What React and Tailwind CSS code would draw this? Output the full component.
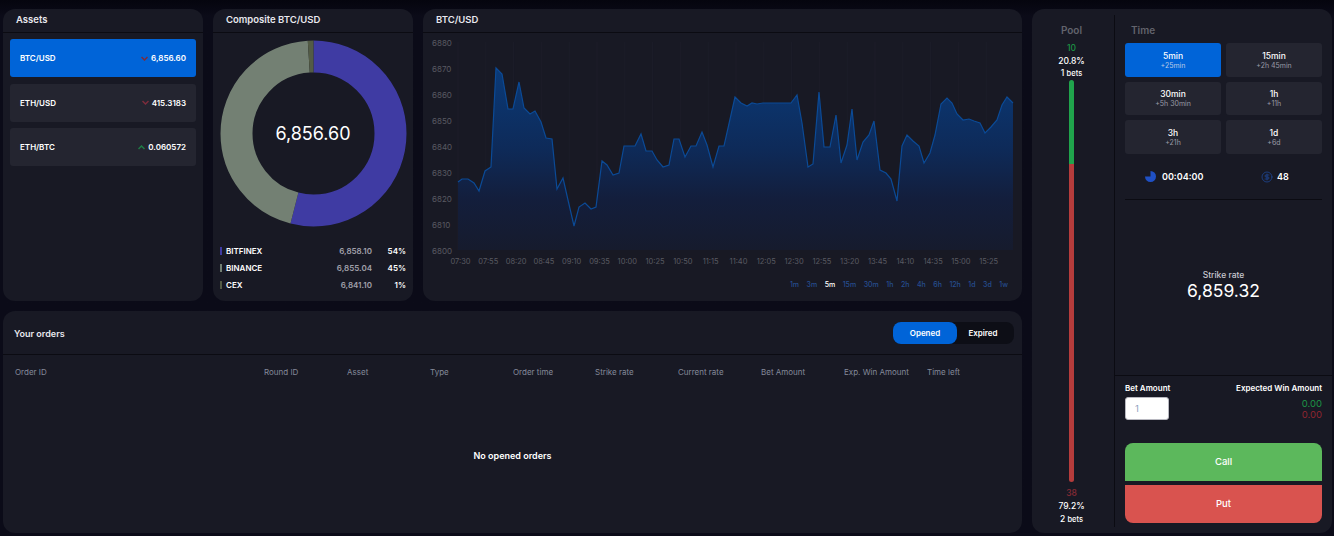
import { CircleDollarSign } from 'lucide-react'

const assets = [
  { name: 'BTC/USD', value: '6,856.60', up: false, active: true },
  { name: 'ETH/USD', value: '415.3183', up: false },
  { name: 'ETH/BTC', value: '0.060572', up: true },
]

const sources = [
  { name: 'BITFINEX', value: '6,858.10', pct: '54%', bar: 'bg-[#3f3ba3]' },
  { name: 'BINANCE', value: '6,855.04', pct: '45%', bar: 'bg-[#738073]' },
  { name: 'CEX', value: '6,841.10', pct: '1%', bar: 'bg-[#535b45]' },
]

const prices = [6880, 6870, 6860, 6850, 6840, 6830, 6820, 6810, 6800]
const times = ['07:30', '07:55', '08:20', '08:45', '09:10', '09:35', '10:00', '10:25', '10:50', '11:15', '11:40', '12:05', '12:30', '12:55', '13:20', '13:45', '14:10', '14:35', '15:00', '15:25']
const frames = ['1m', '3m', '5m', '15m', '30m', '1h', '2h', '4h', '6h', '12h', '1d', '3d', '1w']

const points = '458,182 462,179 468,179 474,183 479,191 485,171 491,167 496,68 502,74 508,109 513,109 519,82 524,108 530,114 535,111 541,122 546,138 552,139 557,189 563,178 568,200 574,226 579,207 585,203 591,209 596,207 602,161 607,165 613,175 619,173 624,146 635,146 641,134 646,151 652,151 657,160 663,167 669,165 674,139 679,139 685,157 691,146 696,146 702,132 707,145 713,167 719,146 724,146 735,97 741,103 747,106 752,103 757,104 763,103 791,103 797,95 802,123 808,167 813,164 819,92 824,147 830,147 836,115 841,163 847,145 852,109 857,160 863,142 869,135 874,121 880,170 886,173 891,179 897,201 902,146 907,135 913,141 919,146 924,163 930,153 935,135 941,104 947,98 952,103 957,114 963,120 969,119 974,121 980,123 985,133 991,127 997,120 1002,105 1007,97 1013,103'

const columns = [
  { label: 'Order ID', w: 'w-[249px]' },
  { label: 'Round ID', w: 'w-[83px]' },
  { label: 'Asset', w: 'w-[83px]' },
  { label: 'Type', w: 'w-[83px]' },
  { label: 'Order time', w: 'w-[82px]' },
  { label: 'Strike rate', w: 'w-[83px]' },
  { label: 'Current rate', w: 'w-[83px]' },
  { label: 'Bet Amount', w: 'w-[83px]' },
  { label: 'Exp. Win Amount', w: 'w-[83px]' },
  { label: 'Time left', w: 'w-[80px]' },
]

const rounds = [
  { time: '5min', left: '+25min', active: true },
  { time: '15min', left: '+2h 45min' },
  { time: '30min', left: '+5h 30min' },
  { time: '1h', left: '+11h' },
  { time: '3h', left: '+21h' },
  { time: '1d', left: '+6d' },
]

const Chevron = ({ up }) => (
  <svg width="7" height="5" viewBox="0 0 7 5" fill="none" className={up ? 'text-[#1f7a45]' : 'text-[#7c2c3c]'}>
    <path d={up ? 'M0.5 4 L3.5 1 L6.5 4' : 'M0.5 1 L3.5 4 L6.5 1'} stroke="currentColor" strokeWidth="1.5" />
  </svg>
)

const PanelTitle = ({ children, className }) => (
  <div className={`flex h-[24px] shrink-0 items-center border-b border-[#0b0b12] pb-[1px] text-[9.5px] font-semibold text-[#e8e8ee] ${className}`}>
    {children}
  </div>
)

const Assets = () => (
  <div className="flex w-[200px] flex-col rounded-xl bg-[#181924]">
    <PanelTitle className="pl-[13px]">Assets</PanelTitle>
    <div className="flex flex-col gap-[6.5px] px-[7px] pt-[6px]">
      {assets.map((a) => (
        <div key={a.name} className={`flex h-[38px] items-center rounded-[3px] px-[10px] text-[8px] font-semibold text-white ${a.active ? 'bg-[#0064d8]' : 'bg-[#242530]'}`}>
          <span>{a.name}</span>
          <span className="ml-auto mr-[3px]"><Chevron up={a.up} /></span>
          <span>{a.value}</span>
        </div>
      ))}
    </div>
  </div>
)

const Composite = () => (
  <div className="flex w-[200px] flex-col rounded-xl bg-[#181924]">
    <PanelTitle className="pl-[13px]">Composite BTC/USD</PanelTitle>
    <div className="relative mx-auto mt-[7px] h-[187px] w-[187px]">
      <svg width="187" height="187" viewBox="0 0 187 187" className="-rotate-90">
        <circle cx="93.5" cy="93.5" r="77" fill="none" stroke="#3f3ba3" strokeWidth="32" pathLength="100" strokeDasharray="54 46" />
        <circle cx="93.5" cy="93.5" r="77" fill="none" stroke="#738073" strokeWidth="32" pathLength="100" strokeDasharray="45 55" strokeDashoffset="-54" />
        <circle cx="93.5" cy="93.5" r="77" fill="none" stroke="#535b45" strokeWidth="32" pathLength="100" strokeDasharray="1 99" strokeDashoffset="-99" />
      </svg>
      <div className="absolute inset-0 flex items-center justify-center text-[18px] text-white">6,856.60</div>
    </div>
    <div className="mt-[18px] flex flex-col gap-[5px] px-[7px]">
      {sources.map((s) => (
        <div key={s.name} className="flex h-[12px] items-center text-[8px] font-semibold text-white">
          <span className={`mr-[4px] h-[8px] w-[2px] ${s.bar}`} />
          <span>{s.name}</span>
          <span className="ml-auto text-[#a0a0aa]">{s.value}</span>
          <span className="w-[34px] text-right">{s.pct}</span>
        </div>
      ))}
    </div>
  </div>
)

const PriceChart = () => (
  <div className="flex flex-1 flex-col rounded-xl bg-[#181924]">
    <PanelTitle className="pl-[13px]">BTC/USD</PanelTitle>
    <svg width="599" height="238" viewBox="423 33 599 238" className="block">
      <defs>
        <linearGradient id="priceFill" x1="0" y1="0" x2="0" y2="1">
          <stop offset="0" stopColor="#0a3a78" />
          <stop offset="0.45" stopColor="#0e2a58" />
          <stop offset="0.72" stopColor="#131e3c" />
          <stop offset="1" stopColor="#161b2d" />
        </linearGradient>
      </defs>
      {times.map((t, i) => (
        <line key={t} x1={458 + i * 27.8} x2={458 + i * 27.8} y1="42" y2="250" stroke="#1c1d29" strokeWidth="1" />
      ))}
      <polygon points={`458,250 ${points} 1013,250`} fill="url(#priceFill)" />
      <polyline points={points} fill="none" stroke="#0b4a96" strokeWidth="1.2" />
      {prices.map((p, i) => (
        <text key={p} x="432" y={46 + i * 26} fontSize="8" fill="#585962">{p}</text>
      ))}
      {times.map((t, i) => (
        <text key={t} x={460.5 + i * 27.8} y="264" fontSize="7.5" textAnchor="middle" fill="#585962">{t}</text>
      ))}
    </svg>
    <div className="flex justify-end gap-[7.5px] pr-[14px] pt-[9px] text-[7px] font-medium text-[#264d8f]">
      {frames.map((f) => (
        <span key={f} className={f === '5m' ? 'text-white' : ''}>{f}</span>
      ))}
    </div>
  </div>
)

const Orders = () => (
  <div className="mt-[10px] flex h-[222px] flex-col rounded-xl bg-[#181924]">
    <div className="flex h-[44px] shrink-0 items-center border-b border-[#0b0b12] pl-[11px] pr-[8px]">
      <span className="pt-[2px] text-[9px] font-semibold text-[#e8e8ee]">Your orders</span>
      <div className="ml-auto flex h-[22px] w-[121px] rounded-lg bg-[#0d0e16] text-[8px] font-semibold text-white">
        <span className="flex w-[64px] items-center justify-center rounded-lg bg-[#0064d8]">Opened</span>
        <span className="flex flex-1 items-center justify-center pr-[5px]">Expired</span>
      </div>
    </div>
    <div className="flex pl-[12px] pt-[11px] text-[8px] text-[#84899a]">
      {columns.map((c) => (
        <span key={c.label} className={`${c.w} shrink-0 whitespace-nowrap`}>{c.label}</span>
      ))}
    </div>
    <div className="flex flex-1 items-center justify-center pt-[1px] text-[9px] font-semibold text-white">No opened orders</div>
  </div>
)

const Pool = () => (
  <div className="flex w-[83px] shrink-0 flex-col items-center border-r border-[#0b0b12] pr-[3px] text-[8.5px] font-medium text-white">
    <div className="flex h-[23px] items-end text-[10px] font-semibold text-[#62636c]">Pool</div>
    <div className="mt-[4px] text-[#1c9445]">10</div>
    <div>20.8%</div>
    <div className="leading-[11px]">1 <span className="text-[7.5px]">bets</span></div>
    <div className="mt-[1.5px] flex h-[402px] w-[5px] flex-col overflow-hidden rounded-full">
      <div className="h-[84px] bg-[#20a44c]" />
      <div className="flex-1 bg-[#b53c3c]" />
    </div>
    <div className="mt-[5px] text-[#8a2b35]">38</div>
    <div>79.2%</div>
    <div className="leading-[12px]">2 <span className="text-[7.5px]">bets</span></div>
  </div>
)

const BetPanel = () => (
  <div className="flex flex-1 flex-col">
    <div className="flex h-[28px] shrink-0 items-end pb-[5px] pl-[16px] text-[10px] font-semibold text-[#62636c]">Time</div>
    <div className="grid grid-cols-2 gap-[5px] px-[10px]">
      {rounds.map((r) => (
        <div key={r.time} className={`flex h-[33.6px] flex-col items-center justify-center rounded-[3px] pt-[1px] ${r.active ? 'bg-[#0064d8]' : 'bg-[#242530]'}`}>
          <span className="text-[8.5px] font-medium leading-[10px] text-white">{r.time}</span>
          <span className={`text-[7px] leading-[9px] ${r.active ? 'text-[#b9c9e6]' : 'text-[#9a9ba6]'}`}>{r.left}</span>
        </div>
      ))}
    </div>
    <div className="mx-[10px] flex h-[46px] shrink-0 items-center border-b border-[#0b0b12] pt-[1px] text-[9px] font-semibold text-white">
      <div className="flex w-[136px] items-center gap-[6px] pl-[20px]">
        <svg width="11" height="11" viewBox="0 0 12 12">
          <path d="M6 0 A6 6 0 1 1 0 6 H6 Z" fill="#1f50c4" />
        </svg>
        <span>00:04:00</span>
      </div>
      <div className="flex items-center gap-[4px]">
        <CircleDollarSign size={12} color="#1d4a9b" strokeWidth={1.5} />
        <span>48</span>
      </div>
    </div>
    <div className="flex flex-1 flex-col items-center justify-center pb-[5px] text-white">
      <span className="text-[8.5px] font-medium leading-[11px] text-[#c8c8d0]">Strike rate</span>
      <span className="text-[17.5px] leading-[19px]">6,859.32</span>
    </div>
    <div className="h-[152px] shrink-0 border-t border-[#0b0b12] px-[10px] pt-[6px]">
      <div className="flex justify-between text-[8px] font-semibold leading-[12px] text-white">
        <span>Bet Amount</span>
        <span>Expected Win Amount</span>
      </div>
      <div className="mt-[3px] flex h-[33px] items-start justify-between">
        <input defaultValue="1" className="h-[23px] w-[44px] rounded-[3px] border border-[#b8b8c0] bg-white pl-[9px] text-[9.5px] text-[#8f9fc0] outline-none" />
        <div className="pt-[1px] text-right text-[9.5px] leading-[11px]">
          <div className="text-[#1c9445]">0.00</div>
          <div className="text-[#8f2530]">0.00</div>
        </div>
      </div>
      <div className="mt-[13px] flex flex-col gap-[4px] text-[9.5px] font-medium text-white">
        <button className="flex h-[38px] items-center justify-center rounded-t-lg bg-[#5cb85c]">Call</button>
        <button className="flex h-[38px] items-center justify-center rounded-b-lg bg-[#d9534f]">Put</button>
      </div>
    </div>
  </div>
)

export default function App() {
  return (
    <div className="flex h-[536px] w-[1334px] gap-[10px] overflow-hidden bg-linear-to-b from-[#05050e] to-[#0b0b18] to-[3%] pl-[3px] pt-[9px] font-['Inter',sans-serif]">
      <div className="w-[1019px] shrink-0">
        <div className="flex h-[292px] gap-[10px]">
          <Assets />
          <Composite />
          <PriceChart />
        </div>
        <Orders />
      </div>
      <div className="flex h-[524px] w-[300px] shrink-0 rounded-xl bg-[#181924] py-[6px]">
        <Pool />
        <BetPanel />
      </div>
    </div>
  )
}
